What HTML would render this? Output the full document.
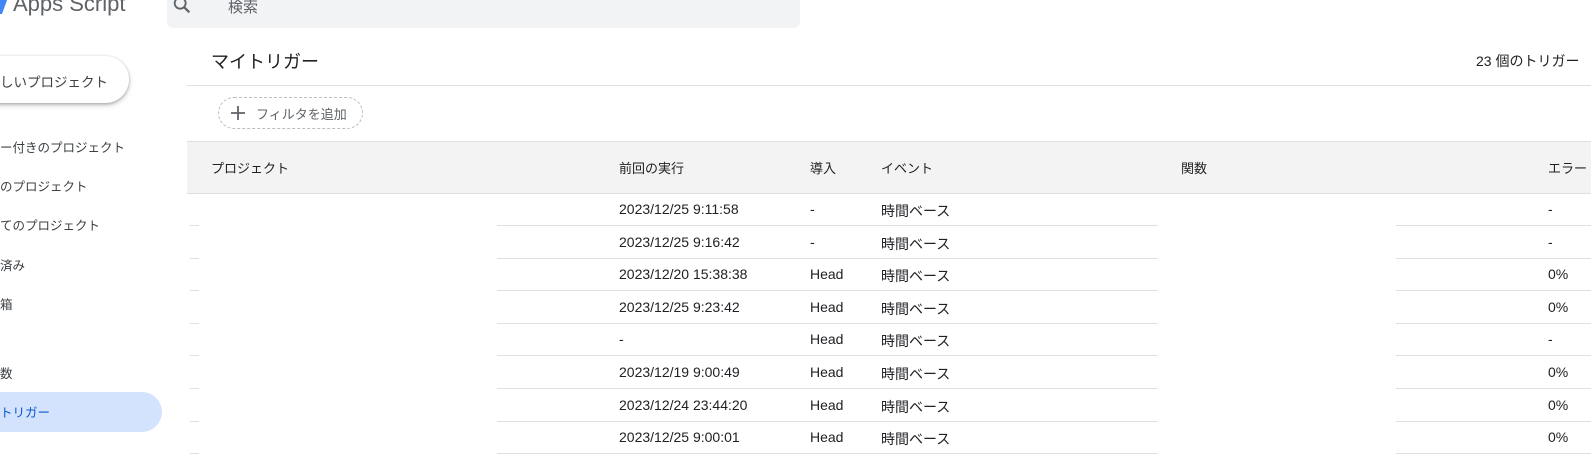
<!DOCTYPE html>
<html><head><meta charset="utf-8"><style>
*{margin:0;padding:0;box-sizing:border-box}
body{width:1591px;height:470px;overflow:hidden;background:#fff;font-family:"Liberation Sans","Noto Sans CJK JP",sans-serif;color:#202124;position:relative}
.a{position:absolute;white-space:nowrap}
.nav{font-size:12.5px;color:#3c4043}
.hl{position:absolute;height:1px;background:#e0e0e0}
.c{font-size:13px;color:#202124}
.r{font-size:14px;color:#202124}
</style></head><body>
<div class="a" style="left:-6px;top:-8px;width:12px;height:22px;background:#4285f4;transform:skewX(-20deg)"></div>
<div class="a" style="left:13px;top:-9px;font-size:22px;color:#5f6368">Apps Script</div>
<div class="a" style="left:167px;top:-4px;width:633px;height:32px;background:#f1f3f4;border-radius:6px"></div>
<svg class="a" style="left:171px;top:-6px" width="22" height="22" viewBox="0 0 24 24"><circle cx="10" cy="10" r="6" fill="none" stroke="#5f6368" stroke-width="2"/><path d="M14.5 14.5L20 20" stroke="#5f6368" stroke-width="2.4"/></svg>
<div class="a" style="left:228px;top:-4px;font-size:15px;color:#5f6368">検索</div>

<div class="a" style="left:-40px;top:56px;width:169px;height:47px;border-radius:24px;background:#fff;box-shadow:0 1px 3px rgba(0,0,0,.3),0 3px 6px rgba(0,0,0,.12)"></div>
<div class="a" style="left:0;top:71px;font-size:13.5px;color:#3c4043">しいプロジェクト</div>
<div class="a nav" style="left:0;top:137px">ー付きのプロジェクト</div>
<div class="a nav" style="left:0;top:176px">のプロジェクト</div>
<div class="a nav" style="left:0;top:215px">てのプロジェクト</div>
<div class="a nav" style="left:0;top:255px">済み</div>
<div class="a nav" style="left:0;top:294px">箱</div>
<div class="a nav" style="left:0;top:363px">数</div>
<div class="a" style="left:-30px;top:392px;width:192px;height:40px;border-radius:20px;background:#d3e3fd"></div>
<div class="a nav" style="left:0;top:402px;color:#0b57d0">トリガー</div>

<div class="a" style="left:211px;top:48px;font-size:18px">マイトリガー</div>
<div class="a" style="left:1476px;top:51px;font-size:14px">23 個のトリガー</div>
<div class="hl" style="left:187px;top:85px;right:0"></div>
<div class="a" style="left:218px;top:97px;width:145px;height:32px;border:1px dashed #bdbdbd;border-radius:16px"></div>
<svg class="a" style="left:230px;top:105px" width="16" height="16" viewBox="0 0 16 16"><path d="M8 1V15M1 8H15" stroke="#5f6368" stroke-width="1.8"/></svg>
<div class="a" style="left:256px;top:104px;font-size:13px;color:#5f6368">フィルタを追加</div>

<div class="a" style="left:187px;top:141px;right:0;height:53px;background:#f3f3f3;border-top:1px solid #e0e0e0;border-bottom:1px solid #e0e0e0"></div>
<div class="a c" style="left:211px;top:158px">プロジェクト</div>
<div class="a c" style="left:619px;top:158px">前回の実行</div>
<div class="a c" style="left:810px;top:158px">導入</div>
<div class="a c" style="left:881px;top:158px">イベント</div>
<div class="a c" style="left:1181px;top:158px">関数</div>
<div class="a c" style="left:1548px;top:158px">エラー</div>

<div id="rows"></div>
<script>
var d=[["2023/12/25 9:11:58","-","-"],["2023/12/25 9:16:42","-","-"],["2023/12/20 15:38:38","Head","0%"],["2023/12/25 9:23:42","Head","0%"],["-","Head","-"],["2023/12/19 9:00:49","Head","0%"],["2023/12/24 23:44:20","Head","0%"],["2023/12/25 9:00:01","Head","0%"]];
var h="";
d.forEach(function(r,i){var t=201+32.6*i,l=225+32.6*i;
h+='<div class="a r" style="left:619px;top:'+t+'px">'+r[0]+'</div><div class="a r" style="left:810px;top:'+t+'px">'+r[1]+'</div><div class="a r" style="left:881px;top:'+t+'px">時間ベース</div><div class="a r" style="left:1548px;top:'+t+'px">'+r[2]+'</div>';
h+='<div class="hl" style="left:190px;width:9px;top:'+l+'px"></div><div class="hl" style="left:497px;width:661px;top:'+l+'px"></div><div class="hl" style="left:1396px;right:0;top:'+l+'px"></div>';});
document.getElementById("rows").innerHTML=h;
</script>
</body></html>
